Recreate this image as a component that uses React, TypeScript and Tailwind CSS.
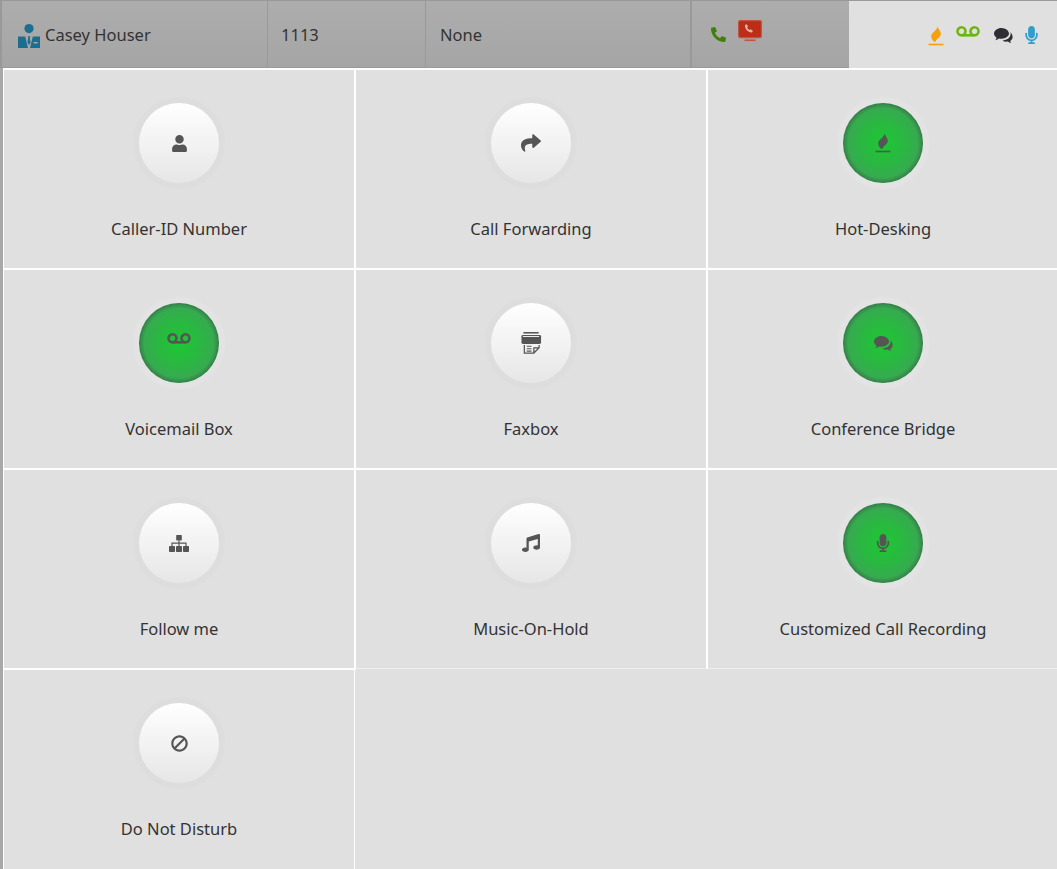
import type { ReactNode } from "react";
import { FaBan, FaMicrophone, FaMusic, FaPhoneAlt, FaShare, FaUser } from "react-icons/fa";

function FireIcon({ className }: { className?: string }) {
    return (
        <svg viewBox="0 0 16 20" className={className} fill="currentColor">
            <path d="M9.800 0C9.500 3 13 4.500 12.800 8 12.500 11.500 8.500 12.500 7 16.200 4.500 15 3 12.500 3.200 10 3.500 6 9 5 9.800 0z" />
            <rect x="0.500" y="17.700" width="15" height="1.600" />
        </svg>
    );
}

function VoicemailIcon({ className }: { className?: string }) {
    return (
        <svg viewBox="0 0 24 11" className={className} fill="none" stroke="currentColor" strokeWidth="2.600">
            <circle cx="5.500" cy="5.300" r="4" />
            <circle cx="18.500" cy="5.300" r="4" />
            <path d="M5.500 9.300h13" />
        </svg>
    );
}

function CommentsIcon({ className }: { className?: string }) {
    return (
        <svg viewBox="0 0 19 15" className={className} fill="currentColor">
            <path d="M7.500 0C3.400 0 0 2.500 0 5.600c0 1.700 1 3.200 2.600 4.200-.2.900-.7 1.700-1.400 2.400 1.500-.2 2.900-.8 4-1.700.7.100 1.500.2 2.300.2 4.100 0 7.500-2.300 7.500-5.100S11.600 0 7.500 0z" />
            <path d="M16.200 3.800c.3.700.5 1.300.5 2 0 3.700-3.800 6.400-8.300 6.700 1.100.8 2.500 1.200 3.900 1.200.5 0 1-.1 1.500-.1 1 .8 2.200 1.200 3.600 1.400-.6-.6-1-1.300-1.200-2.100 1.500-.9 2.400-2.300 2.400-3.900 0-2.100-1-3.700-2.400-5.200z" />
        </svg>
    );
}

function SitemapIcon({ className }: { className?: string }) {
    return (
        <svg viewBox="0 0 20 17" className={className} fill="currentColor">
            <rect x="7.200" y="0" width="5.600" height="5.400" rx="0.600" />
            <rect x="0" y="11" width="6" height="6" rx="0.800" />
            <rect x="7" y="11" width="6" height="6" rx="0.800" />
            <rect x="14" y="11" width="6" height="6" rx="0.800" />
            <path fill="none" stroke="currentColor" strokeWidth="1.200" d="M10 5.400V11M3 11V8.200h14V11" />
        </svg>
    );
}

function FaxIcon({ className }: { className?: string }) {
    return (
        <svg viewBox="0 0 22 24" className={className} fill="currentColor">
            <rect x="2.500" y="0.500" width="16" height="1.600" />
            <rect x="0.500" y="3.500" width="20.500" height="9.500" rx="1.500" />
            <rect x="2" y="4.700" width="17" height="1" fill="#f4f4f4" />
            <path fill="none" stroke="currentColor" strokeWidth="1.300" d="M3.500 14v8.500h10l5.500-5.500v-3M13.500 22.500V17h5.500" />
            <path fill="none" stroke="currentColor" strokeWidth="1.100" d="M6 15.500h5M6 18h5M6 20.500h5" />
        </svg>
    );
}

function AgentIcon() {
    return (
        <svg viewBox="0 0 22 24" className="w-[22px] h-6 text-[#1d6e8e]" fill="currentColor">
            <circle cx="11" cy="4.600" r="4.600" />
            <path d="M0 12.500h7.200L10 24H0z" />
            <path d="M22 12.500h-7.200L12 24h10z" />
            <path d="M9.800 12.200h2.400l-.4 2 .8 4.300-1.600 2.500-1.600-2.500.8-4.300z" />
            <rect x="15.500" y="18" width="4.200" height="1.400" fill="#a9a9a9" />
        </svg>
    );
}

function MonitorPhoneIcon() {
    return (
        <svg viewBox="0 0 24 22" className="w-6 h-[22px]">
            <rect x="0.600" y="0.600" width="22.800" height="17" rx="1.500" fill="#bb2f1b" stroke="#c8503e" strokeWidth="1.200" />
            <rect x="2.300" y="2.300" width="19.400" height="13" fill="#bf2d17" stroke="#9c3526" strokeWidth="0.500" />
            <rect x="6.500" y="19.500" width="11" height="1.600" fill="#c8503e" />
            <path d="M7 5l1.700-.8 1.400 2.400-1 .9c.5 1.100 1.400 2 2.500 2.600l1-.9 2.300 1.500-.9 1.700C10.100 12.700 6.600 9.100 7 5z" fill="#e4b3a8" />
        </svg>
    );
}

type Feature = { label: string; icon: ReactNode; active?: boolean; cellClass?: string };

const cellBase = "flex flex-col items-center pt-[33px] border-white";

const features: Feature[] = [
    { label: "Caller-ID Number", icon: <FaUser className="w-[15px] h-[17px]" /> },
    { label: "Call Forwarding", icon: <FaShare className="w-5 h-5" /> },
    { label: "Hot-Desking", icon: <FireIcon className="w-[16px] h-5" />, active: true },
    { label: "Voicemail Box", icon: <VoicemailIcon className="w-6 h-[11px] -mt-[10px]" />, active: true },
    { label: "Faxbox", icon: <FaxIcon className="w-[21px] h-6" /> },
    { label: "Conference Bridge", icon: <CommentsIcon className="w-[19px] h-[15px]" />, active: true },
    { label: "Follow me", icon: <SitemapIcon className="w-5 h-[17px]" /> },
    { label: "Music-On-Hold", icon: <FaMusic className="w-[18px] h-[18px]" />, cellClass: "h-[199px] self-start border-r-2 border-b border-b-[#eeeeee]" },
    { label: "Customized Call Recording", icon: <FaMicrophone className="w-[14px] h-[18px]" />, active: true, cellClass: "h-[199px] self-start border-r-2 border-b border-b-[#eeeeee]" },
    { label: "Do Not Disturb", icon: <FaBan className="w-[17px] h-[17px] -scale-x-100" />, cellClass: "h-[200px] w-[351px] border-r" },
];

function FeatureCell({ label, icon, active, cellClass }: Feature) {
    return (
        <div className={`${cellBase} ${cellClass ?? "h-[200px] border-r-2 border-b-2"}`}>
            <div
                className={
                    active
                        ? "w-20 h-20 rounded-full flex items-center justify-center text-[#555] bg-[radial-gradient(circle_closest-side,#1cc832_0%,#2cb544_60%,#37aa50_87%,#35894a_97%,#2f7f42_100%)] shadow-[0_0_0_6px_#e3e3e3]"
                        : "w-20 h-20 rounded-full flex items-center justify-center text-[#555] bg-gradient-to-b from-white to-[#e6e6e6] shadow-[0_0_0_6px_#dddddd]"
                }
            >
                {icon}
            </div>
            <span className="mt-[34px] text-[16.5px] leading-6 text-[#333]">{label}</span>
        </div>
    );
}

export default function App() {
    return (
        <div className="w-[1057px] h-[869px] overflow-hidden bg-[#e0e0e0] font-['Noto_Sans',sans-serif]">
            <div className="flex h-[68px] border-t border-t-[#999] text-[16.5px] text-[#333]">
                <div className="w-[849px] flex border-l-[2px] border-l-[#999] border-b border-b-[#999] bg-gradient-to-b from-[#adadad] to-[#a5a5a5]">
                    <div className="w-[266px] flex items-center gap-[5px] pl-4 pt-[3px] border-r border-[#999]">
                        <AgentIcon />
                        <span>Casey Houser</span>
                    </div>
                    <div className="w-[158px] flex items-center pl-[13px] pt-[3px] border-r border-[#999]">1113</div>
                    <div className="w-[265px] flex items-center pl-[14px] pt-[3px] border-r border-[#999]">None</div>
                    <div className="flex-1 flex items-start pl-[19px] border-l border-[#999]">
                        <FaPhoneAlt className="w-[15px] h-[15px] mt-[26px] text-[#3f7f0a]" />
                        <div className="ml-[12px] mt-[19px]">
                            <MonitorPhoneIcon />
                        </div>
                    </div>
                </div>
                <div className="flex-1 flex items-start pl-[79px]">
                    <FireIcon className="w-[16px] h-5 mt-[25px] text-[#f5a10b]" />
                    <VoicemailIcon className="w-6 h-[11px] mt-[25px] ml-3 text-[#6fb511]" />
                    <CommentsIcon className="w-[19px] h-[15px] mt-[27px] ml-[14px] text-[#2e2e33]" />
                    <FaMicrophone className="w-[13px] h-[18px] mt-[25px] ml-3 text-[#2e9fcb]" />
                </div>
            </div>
            <div className="border-l-[3px] border-[#a8a8a8]">
                <div className="grid grid-cols-[352px_352px_352px] border-l border-t-2 border-white">
                    {features.map((f) => (
                        <FeatureCell key={f.label} {...f} />
                    ))}
                </div>
            </div>
        </div>
    );
}
